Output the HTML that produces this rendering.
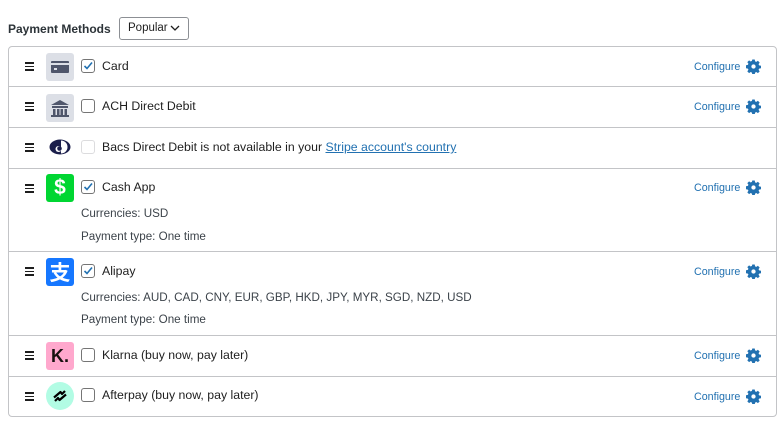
<!DOCTYPE html>
<html><head><meta charset="utf-8"><style>
body{margin:0;width:784px;height:431px;background:#fff;font-family:"Liberation Sans",Arial,sans-serif;color:#1e1e1e;position:relative;overflow:hidden}
.a{position:absolute}
.t{font-size:12.3px;line-height:14px;white-space:nowrap}
.s{font-size:11.65px;color:#3c434a}
.box{left:8px;top:46px;width:767px;height:369px;border:1px solid #c3c4c7;border-radius:4px}
.sep{left:9px;width:767px;height:1px;background:#c3c4c7}
.ham{left:25px;width:9px;height:9px}
.ham i{display:block;height:1.6px;background:#1e1e1e;margin-bottom:2px}
.ic{left:46px;width:28px;height:28px;border-radius:3px}
.cb{left:81px;width:12px;height:12px;border:1px solid #757575;border-radius:3px;background:#fff}
.cfg{left:694px;font-size:10.7px;color:#2271b1}
.gear{left:746px;width:15px;height:15px}
</style></head><body>
<div class="a t" style="left:8px;top:22px;font-weight:bold;color:#2c3338;font-size:12px">Payment Methods</div>
<div class="a" style="left:119px;top:17px;width:70px;height:23px;border:1px solid #8c8f94;border-radius:3px;box-sizing:border-box"></div>
<div class="a t" style="left:128px;top:21px;font-size:11.5px">Popular</div>
<svg class="a" style="left:170px;top:25px" width="10" height="7" viewBox="0 0 10 7"><path d="M1 1l4 4 4-4" fill="none" stroke="#1e1e1e" stroke-width="1.3"/></svg>
<div class="a box"></div>
<div class="a sep" style="top:86px"></div>
<div class="a sep" style="top:127px"></div>
<div class="a sep" style="top:168px"></div>
<div class="a sep" style="top:251px"></div>
<div class="a sep" style="top:335px"></div>
<div class="a sep" style="top:376px"></div>

<div class="a ham" style="top:62px"><i></i><i></i><i></i></div>
<div class="a ham" style="top:102px"><i></i><i></i><i></i></div>
<div class="a ham" style="top:143px"><i></i><i></i><i></i></div>
<div class="a ham" style="top:184px"><i></i><i></i><i></i></div>
<div class="a ham" style="top:267px"><i></i><i></i><i></i></div>
<div class="a ham" style="top:351px"><i></i><i></i><i></i></div>
<div class="a ham" style="top:392px"><i></i><i></i><i></i></div>

<div class="a ic" style="top:53px;background:#dcdfe6"><div class="a" style="left:5px;top:8px;width:18px;height:12px;background:#4f566b;border-radius:1px"></div><div class="a" style="left:5px;top:10px;width:18px;height:2px;background:#dcdfe6"></div><div class="a" style="left:8px;top:15px;width:3px;height:2px;background:#dcdfe6"></div></div>
<div class="a ic" style="top:94px;background:#dcdfe6"><svg width="28" height="28" viewBox="0 0 28 28"><path d="M14 6l9 5H5z M6 12h16v2H6z M7 15h2.5v6H7z M11 15h2.5v6H11z M14.5 15H17v6h-2.5z M18.5 15H21v6h-2.5z M5 21h18v2H5z" fill="#4f566b"/></svg></div>
<svg class="a" style="left:49px;top:138px" width="22" height="18" viewBox="0 0 22 18"><ellipse cx="11" cy="9" rx="10.5" ry="7.5" fill="#1b1e4b"/><path d="M12 2.5v13a6.5 6.5 0 0 0 0-13z" fill="#fff"/><circle cx="9.5" cy="11" r="3" fill="#fff"/><circle cx="10.5" cy="10.5" r="2.3" fill="#1b1e4b"/></svg>
<div class="a ic" style="top:174px;background:#00d632"><div class="a" style="left:0;top:2px;width:28px;text-align:center;color:#fff;font-weight:bold;font-size:21px;line-height:24px">$</div></div>
<div class="a ic" style="top:258px;background:#1677ff"><div class="a" style="left:0;top:2px;width:28px;text-align:center;color:#fff;font-size:21px;line-height:24px;font-family:'Noto Sans CJK SC',sans-serif;font-weight:bold">支</div></div>
<div class="a ic" style="top:342px;background:#ffa8cd"><div class="a" style="left:0;top:5px;width:28px;text-align:center;color:#17120f;font-weight:bold;font-size:18px;line-height:19px">K.</div></div>
<div class="a ic" style="top:382px;background:#b2fce4;border-radius:50%"><svg width="28" height="28" viewBox="0 0 28 28"><path d="M8 15.5l6.5-5.5 1.5 2 3-3" fill="none" stroke="#000" stroke-width="2.2" stroke-linejoin="round"/><path d="M20 12.5l-6.5 5.5-1.5-2-3 3" fill="none" stroke="#000" stroke-width="2.2" stroke-linejoin="round"/></svg></div>

<div class="a cb" style="top:59px"><svg class="a" style="left:1px;top:1px" width="10" height="10" viewBox="0 0 10 10"><path d="M1.5 5l2.5 2.5 5-6" fill="none" stroke="#2271b1" stroke-width="1.6"/></svg></div>
<div class="a cb" style="top:99px"></div>
<div class="a cb" style="top:140px;border-color:#dcdcde"></div>
<div class="a cb" style="top:180px"><svg class="a" style="left:1px;top:1px" width="10" height="10" viewBox="0 0 10 10"><path d="M1.5 5l2.5 2.5 5-6" fill="none" stroke="#2271b1" stroke-width="1.6"/></svg></div>
<div class="a cb" style="top:264px"><svg class="a" style="left:1px;top:1px" width="10" height="10" viewBox="0 0 10 10"><path d="M1.5 5l2.5 2.5 5-6" fill="none" stroke="#2271b1" stroke-width="1.6"/></svg></div>
<div class="a cb" style="top:348px"></div>
<div class="a cb" style="top:388px"></div>

<div class="a t" style="left:102px;top:59px">Card</div>
<div class="a t" style="left:102px;top:99px">ACH Direct Debit</div>
<div class="a t" style="left:102px;top:140px">Bacs Direct Debit is not available in your <span style="color:#2271b1;text-decoration:underline">Stripe account's country</span></div>
<div class="a t" style="left:102px;top:180px">Cash App</div>
<div class="a t s" style="left:81px;top:207px">Currencies: USD</div>
<div class="a t s" style="left:81px;top:230px">Payment type: One time</div>
<div class="a t" style="left:102px;top:264px">Alipay</div>
<div class="a t s" style="left:81px;top:291px">Currencies: AUD, CAD, CNY, EUR, GBP, HKD, JPY, MYR, SGD, NZD, USD</div>
<div class="a t s" style="left:81px;top:313px">Payment type: One time</div>
<div class="a t" style="left:102px;top:348px">Klarna (buy now, pay later)</div>
<div class="a t" style="left:102px;top:388px">Afterpay (buy now, pay later)</div>

<svg width="0" height="0" style="position:absolute"><defs><symbol id="g" viewBox="0 0 16 16"><path d="M6.7 0.5h2.6l.4 2 1.3.6 1.7-1.2 1.9 1.9-1.2 1.7.6 1.3 2 .4v2.6l-2 .4-.6 1.3 1.2 1.7-1.9 1.9-1.7-1.2-1.3.6-.4 2H6.7l-.4-2-1.3-.6-1.7 1.2-1.9-1.9 1.2-1.7-.6-1.3-2-.4V6.7l2-.4.6-1.3-1.2-1.7 1.9-1.9 1.7 1.2 1.3-.6z M8 5.7a2.3 2.3 0 1 0 0 4.6 2.3 2.3 0 1 0 0-4.6z" fill="#2271b1" fill-rule="evenodd"/></symbol></defs></svg>
<div class="a t cfg" style="top:60px">Configure</div><svg class="a gear" style="top:59px"><use href="#g"/></svg>
<div class="a t cfg" style="top:100px">Configure</div><svg class="a gear" style="top:99px"><use href="#g"/></svg>
<div class="a t cfg" style="top:181px">Configure</div><svg class="a gear" style="top:180px"><use href="#g"/></svg>
<div class="a t cfg" style="top:265px">Configure</div><svg class="a gear" style="top:264px"><use href="#g"/></svg>
<div class="a t cfg" style="top:349px">Configure</div><svg class="a gear" style="top:348px"><use href="#g"/></svg>
<div class="a t cfg" style="top:390px">Configure</div><svg class="a gear" style="top:389px"><use href="#g"/></svg>
</body></html>
